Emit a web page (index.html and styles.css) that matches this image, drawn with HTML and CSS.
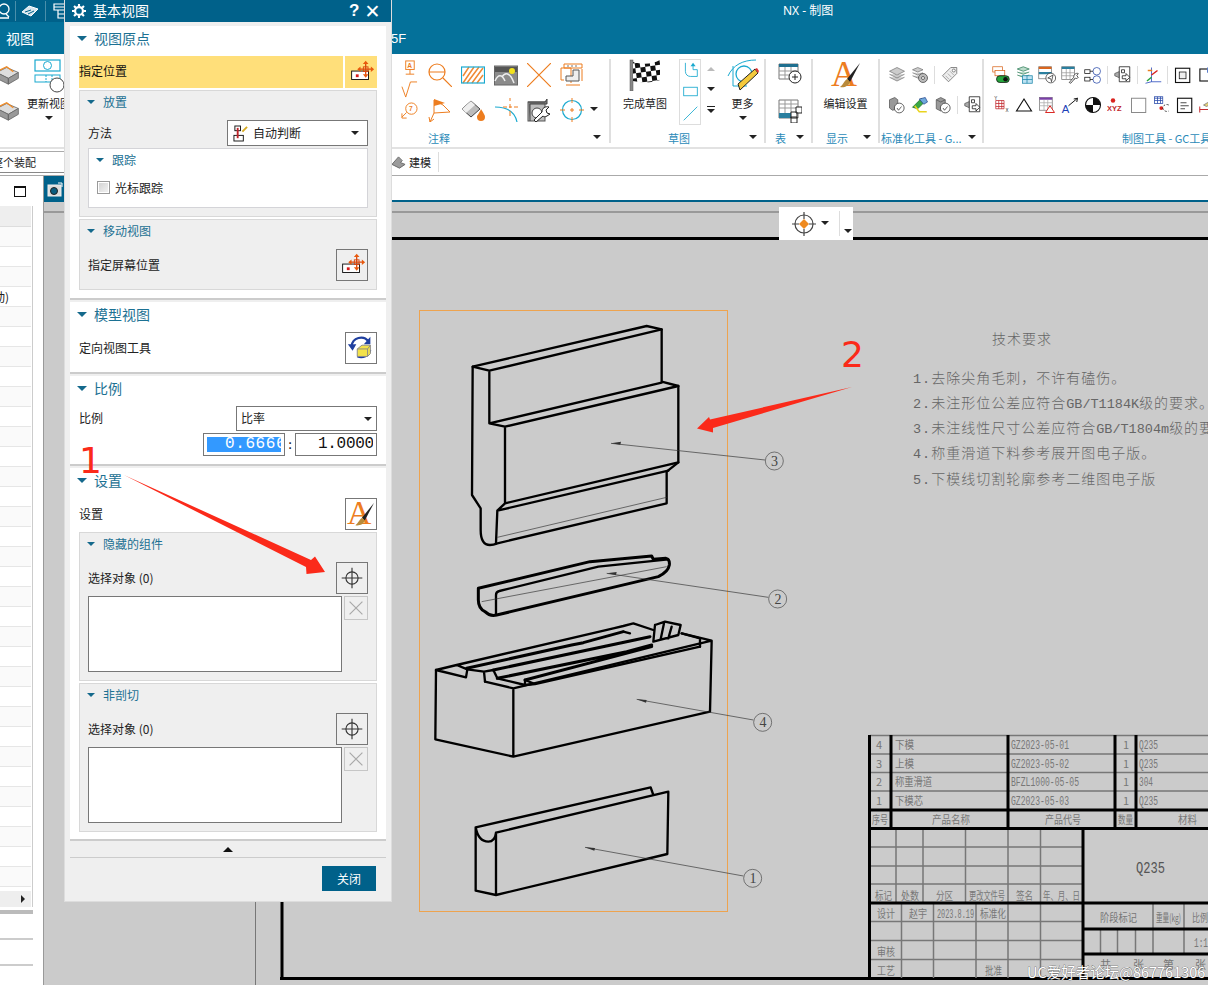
FILE: index.html
```html
<!DOCTYPE html>
<html lang="zh">
<head>
<meta charset="utf-8">
<title>NX - 制图</title>
<link rel="stylesheet" href="styles.css">
</head>
<body>
<svg class="defs" width="0" height="0">
  <defs>
    <symbol id="mv" viewBox="0 0 32 32">
      <rect x="6" y="15" width="18" height="9" fill="#fff" stroke="#111"/>
      <rect x="10.5" y="18.5" width="3" height="3" fill="#d81a1a"/>
      <path d="M21 6v14M14 13h14" stroke="#d9480f" stroke-width="1.4" fill="none"/>
      <path d="M21 4l-3 3.500h6zM21 22l-3-3.500h6zM12 13l3.500-3v6zM30 13l-3.500-3v6z" fill="#e8590c"/>
      <rect x="18.500" y="10.500" width="5" height="5" fill="none" stroke="#d9480f"/>
    </symbol>
    <symbol id="cross" viewBox="0 0 32 32">
      <circle cx="16" cy="16" r="6.500" fill="none" stroke="#333" stroke-width="1.200"/>
      <path d="M16 5v22M5 16h22" stroke="#333" stroke-width="1.200"/>
    </symbol>
    <symbol id="ex" viewBox="0 0 24 24">
      <path d="M5 5l14 14M19 5L5 19" stroke="#a9a9a9" stroke-width="1.300"/>
    </symbol>
    <symbol id="brush" viewBox="0 0 32 32">
      <text x="1" y="27" class="brush-a">A</text>
      <path d="M30 4L17 20l3 3z" fill="#222"/>
      <path d="M17 20l3 3c-1 4-6 6-10 5 3-2 4-6 7-8z" fill="#b98a3a"/>
    </symbol>
    <symbol id="grid3" viewBox="0 0 24 24">
      <path d="M1 3h19v15H1z" fill="#fff" stroke="#777"/>
      <path d="M1 3h19v3H1z" fill="#1f6f8f"/>
      <path d="M1 10h19M1 14h19M7 6v12M13 6v12" stroke="#999"/>
    </symbol>
    <pattern id="ck" width="10" height="10" patternUnits="userSpaceOnUse" patternTransform="rotate(-8)">
      <rect width="10" height="10" fill="#fff"/>
      <rect width="5" height="5" fill="#111"/>
      <rect x="5" y="5" width="5" height="5" fill="#111"/>
    </pattern>
  </defs>
</svg>

<div class="app">
  <header class="head">
    <div class="titlebar">
      <div class="qat">
        <svg class="qi" viewBox="0 0 16 20"><circle cx="6" cy="8" r="5" fill="none" stroke="#fff" stroke-width="1.300"/><path d="M1 17h10M8 13l3 3" stroke="#fff" stroke-width="1.300"/></svg>
        <span class="qsep"></span>
        <svg class="qi qhand" viewBox="0 0 18 14"><path d="M1 8l7-6 9 3-7 7z" fill="#d7e6ee" stroke="#fff"/><path d="M4 8l6-2M7 10l6-3" stroke="#00618a"/></svg>
        <span class="qsep"></span>
        <svg class="qi qwin" viewBox="0 0 14 18"><path d="M1 2h12v6H1zM1 5h12M5 8v8h8v-4H5" fill="none" stroke="#fff" stroke-width="1.200"/></svg>
      </div>
      <div class="apptitle">NX - 制图</div>
    </div>
    <nav class="tabs">
      <span class="tab">视图</span>
      <span class="tab tab-last">5F</span>
    </nav>
  </header>

  <section class="ribbon">
    <div class="rg rg-view">
      <div class="rg-body vcols">
        <div class="cubes">
          <svg class="cube" viewBox="0 0 24 24"><path d="M-4 9l12-6 14 6-12 7z" fill="#ddd" stroke="#666"/><path d="M-4 9v7l14 7v-7zM22 9v7l-12 7v-7z" fill="#999" stroke="#666"/><path d="M-4 8L8 2l8 6" fill="none" stroke="#f08a24" stroke-width="1.500"/></svg>
          <svg class="cube" viewBox="0 0 24 24"><path d="M-4 9l12-6 14 6-12 7z" fill="#ddd" stroke="#666"/><path d="M-4 9v7l14 7v-7zM22 9v7l-12 7v-7z" fill="#999" stroke="#666"/><path d="M-4 8L8 2l8 6" fill="none" stroke="#f08a24" stroke-width="1.500"/></svg>
        </div>
        <div class="bigcol">
          <svg class="update" viewBox="0 0 34 34"><rect x="1" y="1" width="25" height="11" fill="none" stroke="#19a9cf" stroke-width="1.200"/><circle cx="13.500" cy="6.500" r="4" fill="none" stroke="#19a9cf"/><rect x="1" y="16" width="25" height="7" fill="none" stroke="#19a9cf"/><path d="M12 16v7M18 16v7" stroke="#19a9cf" stroke-dasharray="2 1"/><circle cx="23" cy="26" r="7" fill="#fff" stroke="#444"/></svg>
          <span class="lbl">更新视图</span>
          <i class="dd dd-view"></i>
        </div>
      </div>
    </div>

    <div class="rg rg-annot">
      <div class="annot">
        <div class="smallcol">
          <svg class="sm" viewBox="0 0 16 18"><rect x="4" y="1" width="9" height="9" fill="none" stroke="#ed7d1f"/><text x="5.500" y="8.500" class="tiny-a">A</text><path d="M8.500 10v5M4 15h9" stroke="#ed7d1f"/></svg>
          <svg class="sm" viewBox="0 0 18 18"><path d="M1 6l4 11 5-16h7" fill="none" stroke="#ed7d1f"/></svg>
          <svg class="sm" viewBox="0 0 18 18"><circle cx="11" cy="7" r="6" fill="none" stroke="#ed7d1f"/><text x="8.500" y="10" class="tiny-a">7</text><path d="M6 11l-5 5M1 12v5h5" fill="none" stroke="#ed7d1f"/></svg>
        </div>
        <div class="icongrid">
          <svg class="ic" viewBox="0 0 24 24"><circle cx="9" cy="9" r="8" fill="none" stroke="#ed7d1f" stroke-width="1.200"/><path d="M1 9h16M15 15l9 9" stroke="#ed7d1f" stroke-width="1.200"/></svg>
          <svg class="ic" viewBox="0 0 24 24"><path d="M2 20L13 4M6 20L18 4M11 20L22 5M16 20l6-8M2 13l6-9" stroke="#f08a34" stroke-width="1.500"/><rect x="0.500" y="4" width="23" height="16" fill="none" stroke="#19a9cf" stroke-width="1.200"/></svg>
          <svg class="ic" viewBox="0 0 24 24"><rect x="0.500" y="3" width="23" height="19" fill="#8b8b8b" stroke="#666"/><path d="M1 4h22v5H1z" fill="#555"/><circle cx="18" cy="8" r="3" fill="#f4e31d"/><path d="M1 18c3-7 7-7 10 0M8 14c3-5 8-5 12 6" fill="none" stroke="#eee" stroke-width="1.500"/></svg>
          <svg class="ic" viewBox="0 0 24 24"><path d="M0 0l24 24M24 0L0 24" stroke="#ed7d1f" stroke-width="1.200"/></svg>
          <svg class="ic" viewBox="0 0 24 24"><path d="M4 1h18v4H4z" fill="none" stroke="#ed7d1f"/><path d="M7 3h2M11 3h2M15 3h2" stroke="#777"/><path d="M1 5h10v15M1 5v12h3" fill="none" stroke="#ed7d1f"/><path d="M6 18v-5h7V7h6v11z" fill="#eee" stroke="#555"/><path d="M22 6v12M6 22h14" stroke="#ed7d1f"/></svg>
          <span class="ddcell"></span>
          <svg class="ic" viewBox="0 0 24 24"><path d="M6 3v12l16-1-7-7-9-5z" fill="#fff" stroke="#ed7d1f"/><path d="M6 1l11 4-11 3z" fill="#ed7d1f"/><path d="M6 15L2 24M2 24l-1-5M2 24l4-3" fill="none" stroke="#ed7d1f"/></svg>
          <svg class="ic" viewBox="0 0 24 24"><path d="M1 11l9-8 9 8-9 8z" fill="#bbb" stroke="#444"/><path d="M1 11l9-8 4 4-9 8z" fill="#eee"/><path d="M20 11c3 5 4 6 4 8a4 4 0 0 1-8 0c0-2 2-3 4-8z" fill="#ed7d1f"/></svg>
          <svg class="ic" viewBox="0 0 24 24"><path d="M1 9c12 0 20 5 22 15" fill="none" stroke="#19a9cf" stroke-width="1.200"/><path d="M16 0v3M16 6v4M16 13v5M9 9h4M15 9h3M20 9h4" stroke="#ed7d1f"/></svg>
          <svg class="ic" viewBox="0 0 24 24"><rect x="1" y="4" width="17" height="19" fill="#bdbdbd" stroke="#555"/><path d="M1 4h17l2-3v5H3v17" fill="#777" stroke="#444"/><circle cx="10" cy="15" r="5" fill="#fff" stroke="#444"/><path d="M7 22l8-8c0-4 3-6 7-5l-3 3 1 3 3 1-3 2c-2 1-3 1-4 0l-7 6z" fill="#fff" stroke="#222"/></svg>
          <svg class="ic" viewBox="0 0 24 24"><circle cx="12" cy="12" r="9.500" fill="none" stroke="#19a9cf" stroke-width="1.200"/><path d="M12 0v5M12 10v4M12 19v5M0 12h5M10 12h4M19 12h5" stroke="#ed7d1f"/></svg>
          <span class="ddcell"><i class="dd"></i></span>
        </div>
      </div>
      <div class="rg-label lab-annot"><span>注释</span><i class="dd"></i></div>
    </div>

    <div class="rg rg-sketch">
      <div class="sketch">
        <div class="bigitem flagitem">
          <svg class="flag" viewBox="0 0 32 32"><rect x="1" y="1" width="3" height="31" fill="#888" stroke="#555" stroke-width="0.500"/><path d="M4 3c8 2 18 3 27-2v20c-8 3-18 3-27 1z" fill="url(#ck)"/></svg>
          <span class="lbl">完成草图</span>
        </div>
        <div class="gallery">
          <svg class="gi" viewBox="0 0 20 20"><path d="M4 1v10c0 4 3 6 6 6h8v-8h-5V4" fill="none" stroke="#19a9cf"/><path d="M13 1l-3 4h6z" fill="#19a9cf"/></svg>
          <svg class="gi" viewBox="0 0 20 20"><rect x="2" y="5" width="16" height="10" fill="none" stroke="#19a9cf"/></svg>
          <svg class="gi" viewBox="0 0 20 20"><path d="M2 18L18 2" stroke="#19a9cf"/></svg>
        </div>
        <div class="galctl">
          <i class="up"></i><i class="dd"></i><i class="more"></i>
        </div>
        <div class="bigitem moreitem">
          <svg class="more-ic" viewBox="0 0 32 32"><path d="M1 17C6 6 16 1 29 1M6 7v20h14" fill="none" stroke="#19a9cf"/><circle cx="17" cy="15" r="8" fill="none" stroke="#19a9cf" stroke-width="1.300"/><path d="M13 31l-2-6L28 10l3 4z" fill="#f3c93c" stroke="#222"/><path d="M28 10l3 4 1-2-2-3z" fill="#d33"/></svg>
          <span class="lbl">更多</span>
          <i class="dd dd-b"></i>
        </div>
      </div>
      <div class="rg-label lab-sketch"><span>草图</span><i class="dd"></i></div>
    </div>

    <div class="rg rg-table">
      <div class="tablecol">
        <svg class="ic" viewBox="0 0 24 24"><use href="#grid3"/><circle cx="17" cy="16" r="6" fill="#fff" stroke="#222"/><path d="M14 16h6M17 13v6" stroke="#222"/></svg>
        <svg class="ic" viewBox="0 0 24 24"><path d="M1 1h19v18H1z" fill="#fff" stroke="#777"/><path d="M1 5h19M1 9h19M7 1v18M13 1v18" stroke="#999"/><path d="M1 14h13v5H1z" fill="#2a7f9f"/><path d="M13 13h6v6h-6zM18 8h6v6h-6zM13 18h6v6h-6z" fill="#fff" stroke="#222"/></svg>
      </div>
      <div class="rg-label lab-table"><span>表</span><i class="dd"></i></div>
    </div>

    <div class="rg rg-disp">
      <div class="bigitem dispitem">
        <svg class="abr" viewBox="0 0 32 32"><use href="#brush"/></svg>
        <span class="lbl">编辑设置</span>
      </div>
      <div class="rg-label lab-disp"><span>显示</span><i class="dd"></i></div>
    </div>

    <div class="rg rg-std">
      <div class="irows">
        <div class="irow">
          <svg class="ic2" viewBox="0 0 24 24"><path d="M2 7l10-5 10 5-10 5zM2 11l10 5 10-5M2 15l10 5 10-5" fill="#ccc" stroke="#777"/></svg>
          <svg class="ic2" viewBox="0 0 24 24"><path d="M2 5l7-3 7 3-7 3zM2 9l7 3 7-3M2 13l7 3 7-3" fill="#ccc" stroke="#777"/><circle cx="16" cy="16" r="6" fill="#bbb" stroke="#444"/><circle cx="16" cy="16" r="2" fill="#fff" stroke="#444"/></svg>
          <i class="isep"></i>
          <svg class="ic2" viewBox="0 0 24 24"><path d="M2 13L13 2h8v8L10 21z" fill="#eee" stroke="#666"/><circle cx="17" cy="6" r="2" fill="#fff" stroke="#666"/><path d="M6 13l5 5M9 10l5 5M12 7l5 5" stroke="#999"/></svg>
        </div>
        <div class="irow">
          <svg class="ic2" viewBox="0 0 24 24"><path d="M2 5l7-3 4 3v12l-7 2-4-3z" fill="#999" stroke="#555"/><circle cx="15" cy="16" r="6.500" fill="#fff" stroke="#333"/><path d="M12 16l2 3 4-5" fill="none" stroke="#333"/></svg>
          <svg class="ic2" viewBox="0 0 24 24"><path d="M2 15L14 3l4 5-9 9z" fill="#39a845" stroke="#1d6d2a"/><path d="M11 4l8-2 3 6-5 3z" fill="#6fa8dc" stroke="#2a4a8f"/><path d="M5 13l6 8h10" fill="none" stroke="#e9d31f" stroke-width="2"/></svg>
          <svg class="ic2" viewBox="0 0 24 24"><path d="M3 5l6-3 6 3v12l-6 3-6-3z" fill="#999" stroke="#555"/><path d="M3 5l6 3 6-3" fill="none" stroke="#555"/><circle cx="15" cy="16" r="6.500" fill="#fff" stroke="#333"/><path d="M12 16l2 3 4-5" fill="none" stroke="#333"/></svg>
          <i class="isep"></i>
          <svg class="ic2" viewBox="0 0 24 24"><path d="M1 10l7-3v9l-7-3z" fill="#aaa" stroke="#555"/><path d="M7 1h14v20H7z" fill="#fff" stroke="#111"/><path d="M10 5h4v4h-4zM16 10l5 5-5 5v-3h-5v-4h5z" fill="#fff" stroke="#111"/></svg>
        </div>
      </div>
      <div class="rg-label lab-std"><span>标准化工具 - G...</span><i class="dd"></i></div>
    </div>

    <div class="rg rg-draft">
      <div class="irows">
        <div class="irow">
          <svg class="ic2" viewBox="0 0 24 24"><rect x="1" y="1" width="13" height="7" fill="#fff" stroke="#d9661f"/><rect x="4" y="6" width="13" height="7" fill="#fff" stroke="#d9661f"/><rect x="6" y="13" width="17" height="9" rx="4.500" fill="#25a53c" stroke="#111"/><circle cx="18" cy="17.500" r="3" fill="#111"/></svg>
          <svg class="ic2" viewBox="0 0 24 24"><path d="M3 4l8-3 8 3-8 3zM3 8l8 3 8-3M3 12l8 3 8-3" fill="#bcdccb" stroke="#2f7d5a"/><rect x="10" y="13" width="13" height="10" fill="#bfe3f3" stroke="#1c86aa"/><path d="M10 18h13M16 13v10" stroke="#1c86aa"/></svg>
          <svg class="ic2" viewBox="0 0 24 24"><rect x="1" y="1" width="17" height="16" fill="#fff" stroke="#777"/><path d="M1 1h17v3H1z" fill="#d9661f"/><path d="M1 8h17v3H1z" fill="#2a7f9f"/><circle cx="17" cy="16" r="6.500" fill="#fff" stroke="#333"/><path d="M20 12l-7 4 4 1 1 4z" fill="none" stroke="#333"/></svg>
          <svg class="ic2" viewBox="0 0 24 24"><rect x="1" y="1" width="17" height="17" fill="#fff" stroke="#777"/><path d="M1 1h17v3H1z" fill="#2a7f9f"/><path d="M1 9h17M1 13h17M7 4v14M12 4v14" stroke="#999"/><path d="M11 22l6-7c0-4 3-6 6-5l-2 3 2 2c-1 2-3 2-4 1l-6 7z" fill="#fff" stroke="#222"/></svg>
          <svg class="ic2" viewBox="0 0 24 24"><rect x="1" y="5" width="7" height="5" fill="#fff" stroke="#111"/><rect x="1" y="15" width="7" height="5" fill="#fff" stroke="#111"/><circle cx="17" cy="7" r="5" fill="#fff" stroke="#2547a8"/><circle cx="17" cy="18" r="5" fill="#fff" stroke="#2547a8"/><path d="M8 7h4M8 18h4" stroke="#111"/></svg>
          <i class="isep"></i>
          <svg class="ic2" viewBox="0 0 24 24"><path d="M1 10l7-3v9l-7-3z" fill="#aaa" stroke="#555"/><path d="M7 1h14v20H7z" fill="#fff" stroke="#111"/><path d="M10 5h4v4h-4zM16 10l5 5-5 5v-3h-5v-4h5z" fill="#fff" stroke="#111"/></svg>
          <i class="isep"></i>
          <svg class="ic2" viewBox="0 0 24 24"><path d="M10 2v19M10 21h13M10 21l-8 2" stroke="#1c3fb8" fill="none"/><path d="M10 12l8-6" stroke="#d9231f" stroke-width="2"/><path d="M4 20l6-5" stroke="#25a53c" stroke-width="2"/><path d="M5 6h6" stroke="#e8801f" stroke-width="2"/></svg>
          <i class="isep"></i>
          <svg class="ic2" viewBox="0 0 24 24"><rect x="2" y="3" width="19" height="19" fill="#fff" stroke="#111" stroke-width="1.500"/><rect x="7" y="8" width="9" height="9" fill="#eee" stroke="#111"/></svg>
          <svg class="ic2 wide" viewBox="0 0 24 24"><rect x="0.500" y="4" width="23" height="16" fill="#fff" stroke="#111" stroke-width="1.500"/><rect x="10" y="2" width="3" height="7" fill="#5b7dc9"/><path d="M16 20V12h8" stroke="#25a53c" fill="none"/></svg>
        </div>
        <div class="irow">
          <svg class="ic2" viewBox="0 0 24 24"><path d="M5 6h11v11H5zM5 10h11M5 14h11M9 6v11M13 6v11" fill="#fff" stroke="#c0242a"/><text x="3" y="5" class="tiny-k">Y</text><text x="18" y="21" class="tiny-k">X</text></svg>
          <svg class="ic2" viewBox="0 0 24 24"><path d="M12 4l10 16H2z" fill="#fff" stroke="#111" stroke-width="1.500"/></svg>
          <svg class="ic2" viewBox="0 0 24 24"><rect x="2" y="2" width="17" height="17" fill="#fff" stroke="#777"/><path d="M2 2h17v3H2z" fill="#7b3fa8"/><path d="M2 9h17M2 13h17M8 5v14M13 5v14" stroke="#aaa"/><path d="M16 13l6 9H10z" fill="#fff" stroke="#d9231f" stroke-width="1.300"/></svg>
          <svg class="ic2" viewBox="0 0 24 24"><text x="1" y="22" class="a-blue">A</text><path d="M10 13L22 3M22 3l-5 1M22 3l-1 5" fill="none" stroke="#111" stroke-width="1.300"/></svg>
          <svg class="ic2" viewBox="0 0 24 24"><circle cx="12" cy="12" r="10" fill="#fff" stroke="#111" stroke-width="1.500"/><path d="M12 2a10 10 0 0 1 10 10H12zM12 22A10 10 0 0 1 2 12h10z" fill="#111"/></svg>
          <svg class="ic2" viewBox="0 0 24 24"><circle cx="8" cy="6" r="3" fill="#d9231f"/><text x="0" y="20" class="xyz">XYZ</text></svg>
          <svg class="ic2" viewBox="0 0 24 24"><rect x="2" y="3" width="19" height="19" fill="#fff" stroke="#888" stroke-width="1.300"/></svg>
          <svg class="ic2" viewBox="0 0 24 24"><rect x="2" y="1" width="11" height="9" fill="#fff" stroke="#2547a8"/><path d="M2 3h11M2 6h11M6 1v9M10 1v9" stroke="#2547a8"/><circle cx="11" cy="16" r="2.500" fill="#d9231f"/><path d="M21 12c-4-2-8 1-8 4s5 6 8 4" fill="none" stroke="#111" stroke-dasharray="3 2"/></svg>
          <svg class="ic2" viewBox="0 0 24 24"><rect x="2" y="3" width="19" height="19" fill="#fff" stroke="#111" stroke-width="1.500"/><path d="M6 9h8M6 13h11M6 17h6" stroke="#111"/></svg>
          <svg class="ic2" viewBox="0 0 24 24"><path d="M1 18h16M1 14v8" stroke="#c0242a" stroke-width="1.300"/><path d="M6 12l12-7 4 3-12 6z" fill="#e5d078" stroke="#777"/></svg>
        </div>
      </div>
      <div class="rg-label lab-draft"><span>制图工具 - GC工具</span></div>
    </div>
  </section>

  <div class="selbar">
    <div class="asm">整个装配</div>
    <svg class="build-ic" viewBox="0 0 16 16"><path d="M1 10l7-8 4 4-2 2 5 2-6 4z" fill="#9a9a9a" stroke="#666"/></svg>
    <span class="build">建模</span>
    <i class="selsep"></i>
  </div>

  <main class="work">
    <aside class="left">
      <div class="lefttop"><i class="winbtn"></i></div>
      <div class="list">
        <div class="row-h"></div>
        <div class="row"></div><div class="row"></div><div class="row"></div>
        <div class="row"><span class="rowtxt">(动)</span></div>
        <div class="row"></div><div class="row"></div><div class="row"></div><div class="row"></div><div class="row"></div>
        <div class="row"></div><div class="row"></div><div class="row"></div><div class="row"></div><div class="row"></div>
        <div class="row"></div><div class="row"></div><div class="row"></div><div class="row"></div><div class="row"></div>
        <div class="row"></div><div class="row"></div><div class="row"></div><div class="row"></div><div class="row"></div>
        <div class="row"></div><div class="row"></div><div class="row"></div><div class="row"></div><div class="row"></div>
        <div class="row"></div><div class="row"></div><div class="row"></div><div class="row"></div>
        <div class="hscroll"><i class="rarrow"></i></div>
      </div>
      <div class="lsplit"></div>
      <div class="lrow"></div>
      <div class="lrow"></div>
    </aside>

    <div class="right">
      <div class="strip">
        <div class="vtab"><svg class="cam" viewBox="0 0 16 16"><rect x="1" y="3" width="13" height="11" fill="#ddd" stroke="#eee"/><circle cx="7" cy="9" r="3.500" fill="#0a5d80" stroke="#222"/><path d="M11 1h4v4" fill="none" stroke="#fff"/></svg></div>
      </div>
      <div class="viewline"></div>
      <div class="canvas">
        <svg class="sheet" viewBox="44 202 1164 783">
          <rect class="band" x="44" y="211" width="1164" height="2"/>
          <path class="pg" d="M255.500 202V985"/>
          <path class="bl3" d="M282 238.500H1208M282 237V979M280 978.500H1208"/>
          <rect class="frame" x="419.500" y="310.500" width="308" height="601"/>

          <g transform="translate(410 300) scale(.33333)">
            <path class="part" d="M188 200L186 585L212 625V690Q212 735 240 735Q250 735 262 730L770 610V515L805 487V258L755 245V88L710 78Z"/>
            <path class="part" d="M188 200L238 212L755 88M238 212V370L285 380L805 258M238 370L755 248M285 380V610L805 487M285 610L262 632L258 730M262 632L775 512"/>
            <path class="leader" d="M262 712L770 592"/>
            <path class="part part-w" d="M225 935Q205 925 205 900V865L540 785L725 768L730 778L768 775Q780 778 778 795Q775 815 745 830L260 945Q240 950 225 935Z"/>
            <path class="part" d="M258 945V885Q258 875 268 873L565 800L775 778"/>
            <path class="leader" d="M215 905L770 800"/>
            <path class="leader" d="M603 430L1065 480M590 820L1075 892"/>
            <path class="leader-tip" d="M603 430l30-5-2 9zM590 820l30-4-2 9z"/>
            <circle class="ring" cx="1093" cy="483" r="27"/>
            <circle class="ring" cx="1103" cy="897" r="27"/>
          </g>

          <g transform="translate(410 610) scale(.33333)">
            <path class="part" d="M78 180L76 388L310 440L900 305L905 92L815 70M310 235V440M225 215L310 235L905 92"/>
            <path class="part" d="M78 180L140 165L610 55L640 48L670 40L730 60M78 180L168 202L172 178L140 165M225 215L222 185L172 178M222 185L250 180L262 205L345 225L375 222L870 110M345 210L375 222M345 210V226"/>
            <path class="part part-w" d="M170 175L485 105L520 98L640 65M250 180L720 80M262 205L650 125L725 105M345 210L725 110"/>
            <path class="part" d="M640 65L660 70M815 70L870 85V110M735 45L765 35L812 45L805 75L730 95L735 45M762 40L752 88M785 50L775 85"/>
            <path class="part" d="M197 652L722 532L730 555M775 545L258 668M197 652V842L258 855L772 732L775 545M258 668V855M197 652Q205 695 235 695Q255 695 258 668"/>
            <path class="leader" d="M680 268L1030 330M525 712L1000 798"/>
            <path class="leader-tip" d="M680 268l30 2-2 8zM525 712l30 2-2 8z"/>
            <circle class="ring" cx="1058" cy="337" r="27"/>
            <circle class="ring" cx="1028" cy="805" r="27"/>
          </g>
          <text class="num" x="774.500" y="466">3</text>
          <text class="num" x="778" y="604">2</text>
          <text class="num" x="763" y="727">4</text>
          <text class="num" x="753" y="883">1</text>

          <text class="tech" x="992" y="344">技术要求</text>
          <text class="tech" x="913" y="383"><tspan class="mm">1.</tspan>去除尖角毛刺，不许有磕伤。</text>
          <text class="tech" x="913" y="408"><tspan class="mm">2.</tspan>未注形位公差应符合<tspan class="m">GB/T1184K</tspan>级的要求。</text>
          <text class="tech" x="913" y="433"><tspan class="mm">3.</tspan>未注线性尺寸公差应符合<tspan class="m">GB/T1804m</tspan>级的要求</text>
          <text class="tech" x="913" y="458"><tspan class="mm">4.</tspan>称重滑道下料参考展开图电子版。</text>
          <text class="tech" x="913" y="484"><tspan class="mm">5.</tspan>下模线切割轮廓参考二维图电子版</text>

          <path class="thin" d="M870 735.500H1208M870 754H1208M870 772.500H1208M870 791H1208"/>
          <path class="thin" d="M869 847H1083M869 866H1083M869 884H1083M869 921.500H1083M869 940.500H1083M869 959.500H1083"/>
          <path class="thin" d="M896 829V903M923 829V903M965.500 829V903M1008 829V978M1040.500 829V978M901.500 903V978M933.500 903V978M976 903V978"/>
          <path class="thin" d="M1153 903V954M1184 903V954M1100.500 929V954M1117.500 929V954M1135.500 929V954"/>
          <path class="bl3" d="M869.500 735V978M891 735V828M1008 735V828M1115 735V828M1136 735V828M869 810H1208M869 828.500H1208M869 903H1208M1083 828V978M1083 929H1208M1083 954H1208"/>

          <g class="tb">
            <text x="876" y="749">4</text><text x="895" y="749" textLength="19" lengthAdjust="spacingAndGlyphs">下模</text><text class="m" x="1011" y="749" textLength="58" lengthAdjust="spacingAndGlyphs">GZ2023-05-01</text><text x="1123" y="749">1</text><text class="m" x="1139" y="749" textLength="19" lengthAdjust="spacingAndGlyphs">Q235</text>
            <text x="876" y="768">3</text><text x="895" y="768" textLength="19" lengthAdjust="spacingAndGlyphs">上模</text><text class="m" x="1011" y="768" textLength="58" lengthAdjust="spacingAndGlyphs">GZ2023-05-02</text><text x="1123" y="768">1</text><text class="m" x="1139" y="768" textLength="19" lengthAdjust="spacingAndGlyphs">Q235</text>
            <text x="876" y="786">2</text><text x="895" y="786" textLength="37" lengthAdjust="spacingAndGlyphs">称重滑道</text><text class="m" x="1011" y="786" textLength="68" lengthAdjust="spacingAndGlyphs">BFZL1000-05-05</text><text x="1123" y="786">1</text><text class="m" x="1139" y="786" textLength="14" lengthAdjust="spacingAndGlyphs">304</text>
            <text x="876" y="805">1</text><text x="895" y="805" textLength="28" lengthAdjust="spacingAndGlyphs">下模芯</text><text class="m" x="1011" y="805" textLength="58" lengthAdjust="spacingAndGlyphs">GZ2023-05-03</text><text x="1123" y="805">1</text><text class="m" x="1139" y="805" textLength="19" lengthAdjust="spacingAndGlyphs">Q235</text>
            <text x="872" y="824" textLength="16" lengthAdjust="spacingAndGlyphs">序号</text><text x="932" y="824" textLength="38" lengthAdjust="spacingAndGlyphs">产品名称</text><text x="1045" y="824" textLength="36" lengthAdjust="spacingAndGlyphs">产品代号</text><text x="1118" y="824" textLength="15" lengthAdjust="spacingAndGlyphs">数量</text><text x="1178" y="824" textLength="19" lengthAdjust="spacingAndGlyphs">材料</text>
            <text x="875" y="900" textLength="17" lengthAdjust="spacingAndGlyphs">标记</text><text x="901" y="900" textLength="18" lengthAdjust="spacingAndGlyphs">处数</text><text x="936" y="900" textLength="17" lengthAdjust="spacingAndGlyphs">分区</text><text x="969" y="900" textLength="36" lengthAdjust="spacingAndGlyphs">更改文件号</text><text x="1016" y="900" textLength="17" lengthAdjust="spacingAndGlyphs">签名</text><text x="1043" y="900" textLength="37" lengthAdjust="spacingAndGlyphs">年、月、日</text>
            <text x="877" y="918" textLength="18" lengthAdjust="spacingAndGlyphs">设计</text><text x="909" y="918" textLength="18" lengthAdjust="spacingAndGlyphs">赵宇</text><text class="m" x="937" y="918" textLength="37" lengthAdjust="spacingAndGlyphs">2023.8.19</text><text x="980" y="918" textLength="26" lengthAdjust="spacingAndGlyphs">标准化</text>
            <text x="877" y="956" textLength="18" lengthAdjust="spacingAndGlyphs">审核</text><text x="877" y="975" textLength="18" lengthAdjust="spacingAndGlyphs">工艺</text><text x="985" y="975" textLength="17" lengthAdjust="spacingAndGlyphs">批准</text>
            <text x="1100" y="922" textLength="37" lengthAdjust="spacingAndGlyphs">阶段标记</text><text x="1156" y="922" textLength="25" lengthAdjust="spacingAndGlyphs">重量(kg)</text><text x="1192" y="922" textLength="16" lengthAdjust="spacingAndGlyphs">比例</text>
            <text class="m" x="1194" y="947" textLength="14" lengthAdjust="spacingAndGlyphs">1:1</text>
            <text x="1100" y="969">共</text><text x="1133" y="969">张</text><text x="1163" y="969">第</text><text x="1195" y="969">张</text>
          </g>
          <text class="q235" x="1136" y="873" textLength="29" lengthAdjust="spacingAndGlyphs">Q235</text>
          <text class="wm" x="1027" y="978">UC爱好者论坛@867761306</text>
        </svg>
        <div class="floatbar">
          <svg class="fb-ic" viewBox="0 0 24 24"><circle cx="12" cy="12" r="9" fill="#fff" stroke="#444" stroke-width="1.200"/><path d="M12 0v7M12 17v7M0 12h7M17 12h7" stroke="#444" stroke-width="1.200"/><path d="M12 7l5 5-5 5-5-5z" fill="#ef8a1f"/></svg>
          <i class="dd"></i>
          <i class="fsep"></i>
          <i class="dd dd-low"></i>
        </div>
      </div>
    </div>
  </main>

  <div class="dialog">
    <div class="dtitle">
      <svg class="gear" viewBox="0 0 16 16"><circle cx="8" cy="8" r="4.500" fill="none" stroke="#fff" stroke-width="2.500"/><path d="M8 0v3M8 13v3M0 8h3M13 8h3M2.300 2.300l2.100 2.100M11.600 11.600l2.100 2.100M13.700 2.300l-2.100 2.100M4.400 11.600l-2.100 2.100" stroke="#fff" stroke-width="2.400"/></svg>
      <span class="dname">基本视图</span>
      <span class="dq">?</span>
      <span class="dx">✕</span>
    </div>

    <section class="sec sec-a">
      <h3 class="sechead"><i class="tri"></i>视图原点</h3>
      <div class="hilite">
        <div class="hl-text">指定位置</div>
        <div class="hl-btn"><svg class="btn-ic" viewBox="0 0 32 32"><use href="#mv"/></svg></div>
      </div>
      <div class="sub sub-place">
        <h4 class="subhead"><i class="tri"></i>放置</h4>
        <div class="formrow r-method">
          <span>方法</span>
          <div class="select sel-auto">
            <svg class="sel-ic" viewBox="0 0 16 18"><rect x="2" y="1" width="6" height="5" fill="none" stroke="#111"/><rect x="1" y="11" width="10" height="6" fill="none" stroke="#111"/><path d="M5 3v11" stroke="#c0242a" stroke-width="2"/><path d="M10 7l5-5" stroke="#d6a91f" stroke-width="2"/></svg>
            <span class="sel-t">自动判断</span><i class="dd"></i>
          </div>
        </div>
        <div class="nested">
          <h4 class="subhead nest-h"><i class="tri"></i>跟踪</h4>
          <label class="chk"><i class="box"></i>光标跟踪</label>
        </div>
      </div>
      <div class="sub sub-move">
        <h4 class="subhead"><i class="tri"></i>移动视图</h4>
        <div class="formrow r-move">
          <span>指定屏幕位置</span>
          <div class="btn"><svg class="btn-ic" viewBox="0 0 32 32"><use href="#mv"/></svg></div>
        </div>
      </div>
    </section>

    <section class="sec sec-b">
      <h3 class="sechead"><i class="tri"></i>模型视图</h3>
      <div class="formrow r-b">
        <span>定向视图工具</span>
        <div class="btn"><svg class="btn-ic" viewBox="0 0 32 32"><path d="M6 14a10 10 0 0 1 18-5" fill="none" stroke="#1f3f9f" stroke-width="2.400"/><path d="M26 4v8h-7zM2 12h9l-4 7z" fill="#1f3f9f"/><path d="M26 18a10 10 0 0 1-14 7" fill="none" stroke="#1f3f9f" stroke-width="2"/><path d="M12 17l5-4h9v9l-3 3H12z" fill="#f3e24a" stroke="#888"/><path d="M12 17h11v8M23 17l3-4" fill="none" stroke="#888"/></svg></div>
      </div>
    </section>

    <section class="sec sec-c">
      <h3 class="sechead"><i class="tri"></i>比例</h3>
      <div class="formrow r-scale">
        <span>比例</span>
        <div class="select sel-ratio"><span class="sel-t">比率</span><i class="dd"></i></div>
      </div>
      <div class="ratio">
        <div class="num-in"><span class="sel-num">0.66666</span></div>
        <span class="colon">:</span>
        <div class="num-in"><span class="plain-num">1.00000</span></div>
      </div>
    </section>

    <section class="sec sec-d">
      <h3 class="sechead"><i class="tri"></i>设置</h3>
      <div class="formrow r-b r-set">
        <span>设置</span>
        <div class="btn"><svg class="btn-ic" viewBox="0 0 32 32"><use href="#brush"/></svg></div>
      </div>
      <div class="sub sub-obj">
        <h4 class="subhead"><i class="tri"></i>隐藏的组件</h4>
        <div class="formrow r-sel">
          <span>选择对象 (0)</span>
          <div class="btn"><svg class="btn-ic" viewBox="0 0 32 32"><use href="#cross"/></svg></div>
        </div>
        <div class="objrow">
          <div class="objlist"></div>
          <div class="xbtn"><svg class="x-ic" viewBox="0 0 24 24"><use href="#ex"/></svg></div>
        </div>
      </div>
      <div class="sub sub-obj">
        <h4 class="subhead"><i class="tri"></i>非剖切</h4>
        <div class="formrow r-sel">
          <span>选择对象 (0)</span>
          <div class="btn"><svg class="btn-ic" viewBox="0 0 32 32"><use href="#cross"/></svg></div>
        </div>
        <div class="objrow">
          <div class="objlist"></div>
          <div class="xbtn"><svg class="x-ic" viewBox="0 0 24 24"><use href="#ex"/></svg></div>
        </div>
      </div>
    </section>

    <div class="collapse"><i class="uptri"></i></div>
    <div class="dfoot"><button class="close">关闭</button></div>
  </div>

  <svg class="notes" viewBox="0 0 1208 985">
    <polygon points="124,475 311,560 315,556.500 325,572 306.500,574 306,567"/>
    <polygon points="852,387 710,419.500 709,417 697,428.500 713,432.500 713,428"/>
    <text x="79" y="473">1</text>
    <text x="841" y="367">2</text>
  </svg>
</div>
</body>
</html>
```

FILE: styles.css
```css
* { box-sizing: border-box; }
html, body { margin: 0; padding: 0; height: 100%; overflow: hidden; }
body { font-family: "Noto Sans CJK SC", "Noto Sans", sans-serif; font-size: 12px; color: #222; background: #fff; }
i { display: block; font-style: normal; }
h3, h4 { margin: 0; font-weight: 400; }
.defs { position: absolute; }
.brush-a { font-family: "Liberation Serif", serif; font-size: 36px; fill: #ed7d1f; }
.tiny-a { font-family: "Liberation Sans", sans-serif; font-size: 7px; font-weight: 700; fill: #ed7d1f; }
.tiny-k { font-family: "Liberation Sans", sans-serif; font-size: 6px; fill: #222; }
.a-blue { font-family: "Liberation Sans", sans-serif; font-size: 15px; fill: #1c3fb8; }
.xyz { font-family: "Liberation Sans", sans-serif; font-size: 10px; font-weight: 700; fill: #c0242a; }

.app { position: relative; width: 1208px; height: 985px; overflow: hidden; display: flex; flex-direction: column; }

/* header */
.head { height: 54px; background: #04719a; color: #fff; flex: none; }
.titlebar { height: 22px; display: flex; }
.qat { width: 392px; height: 22px; background: #00618a; display: flex; align-items: center; }
.qi { width: 16px; height: 20px; flex: none; margin-left: -2px; }
.qsep { width: 1px; height: 20px; background: #4a8fab; margin: 0 1px; flex: none; }
.qhand { width: 18px; height: 14px; margin: 0 5px 0 4px; }
.qwin { width: 14px; height: 18px; margin-left: 6px; }
.apptitle { margin-left: 391px; font-size: 12px; line-height: 22px; font-family: "Noto Sans", "Noto Sans CJK SC", sans-serif; }
.tabs { height: 32px; display: flex; font-size: 14px; line-height: 33px; background: #04719a; }
.tab { padding-left: 6px; }
.tab-last { margin-left: 351px; font-family: "Liberation Sans", sans-serif; font-size: 13px; }

/* ribbon */
.ribbon { height: 93px; flex: none; display: flex; padding-top: 5px; background: #fff; font-size: 11px; }
.rg { height: 84px; border-right: 2px solid #dfdfdf; display: flex; flex-direction: column; flex: none; position: relative; }
.rg-label { height: 14px; margin-top: auto; margin-bottom: -1px; display: flex; align-items: center; color: #2a8ab8; line-height: 14px; white-space: nowrap; }
.rg-label span { padding-top: 2px; }
.rg-label .dd { margin-left: auto; }
.lbl { white-space: nowrap; color: #222; line-height: 14px; }
.dd { width: 0; height: 0; border-left: 4px solid transparent; border-right: 4px solid transparent; border-top: 4px solid #222; }
.ic { width: 24px; height: 24px; display: block; }
.ic2 { width: 18px; height: 18px; display: block; flex: none; margin: 0 2.500px; }
.ic2.wide { width: 23px; margin-left: 3px; margin-right: 0; }
.sm { width: 17px; height: 17px; display: block; }

.rg-view { width: 65px; border-right: 0; }
.vcols { display: flex; height: 70px; }
.cubes { width: 27px; flex: none; display: flex; flex-direction: column; gap: 12px; padding-top: 4px; }
.cube { width: 20px; height: 24px; overflow: visible; }
.bigcol { display: flex; flex-direction: column; overflow: visible; }
.update { width: 34px; height: 34px; margin: 0 0 3px 7px; display: block; flex: none; }
.dd-view { margin: 6px 0 0 18px; }

.rg-annot { width: 546px; }
.annot { display: flex; padding: 0 0 0 336px; height: 70px; }
.smallcol { width: 22px; display: flex; flex-direction: column; gap: 4px; padding-top: 1px; }
.icongrid { display: grid; grid-template-columns: repeat(5, 33px) 11px; grid-auto-rows: 35px; justify-items: center; padding-top: 4px; }
.ddcell { display: flex; justify-content: center; width: 100%; padding-top: 9px; }
.lab-annot { padding: 0 8px 0 363px; }

.rg-sketch { width: 155px; }
.sketch { display: flex; height: 70px; }
.bigitem { display: flex; flex-direction: column; align-items: center; }
.flagitem { width: 68px; }
.flag { width: 32px; height: 32px; margin-bottom: 5px; display: block; flex: none; }
.gallery { width: 22px; height: 66px; border: 1px solid #ddd; display: flex; flex-direction: column; align-items: center; justify-content: space-around; }
.gi { width: 17px; height: 17px; display: block; }
.galctl { width: 20px; display: flex; flex-direction: column; align-items: center; }
.galctl .up { width: 0; height: 0; border-left: 4px solid transparent; border-right: 4px solid transparent; border-bottom: 4px solid #bbb; margin: 8px 0 16px; }
.galctl .more { width: 8px; height: 6px; margin-top: 15px; border-top: 1px solid #222; position: relative; }
.galctl .more::after { content: ""; display: block; width: 0; height: 0; border-left: 4px solid transparent; border-right: 4px solid transparent; border-top: 4px solid #222; margin-top: 2px; }
.moreitem { width: 43px; margin-left: 0; }
.more-ic { width: 34px; height: 32px; margin-bottom: 5px; display: block; flex: none; }
.dd-b { margin-top: 6px; }
.lab-sketch { padding: 0 7px 0 57px; }

.rg-table { width: 47px; }
.tablecol { display: flex; flex-direction: column; gap: 14px; height: 70px; padding: 2px 0 0 12px; }
.lab-table { padding: 0 7px 0 9px; }

.rg-disp { width: 67px; }
.dispitem { height: 70px; }
.abr { width: 34px; height: 32px; margin-bottom: 5px; display: block; flex: none; }
.lab-disp { padding: 0 7px 0 13px; }

.rg-std { width: 104px; }
.irows { height: 70px; display: flex; flex-direction: column; gap: 12px; padding: 7px 0 0 5px; }
.irow { display: flex; align-items: center; height: 18px; }
.isep { width: 1px; height: 18px; background: #ddd; margin: 0 3px; flex: none; }
.lab-std { padding: 0 6px 0 1px; }

.rg-draft { width: 240px; border-right: 0; }
.lab-draft { padding-left: 138px; }

/* selection bar */
.selbar { height: 29px; flex: none; display: flex; align-items: center; border-top: 2px solid #e2e2e2; border-bottom: 1px solid #aaa; background: #fff; font-size: 11px; }
.asm { width: 64px; height: 22px; line-height: 21px; text-indent: -8px; border-top: 1px solid #aaa; border-bottom: 1px solid #888; overflow: hidden; white-space: nowrap; flex: none; }
.build-ic { width: 15px; height: 15px; margin-left: 327px; flex: none; }
.build { margin-left: 3px; line-height: 16px; }
.selsep { width: 1px; height: 20px; background: #ddd; margin-left: 7px; }

/* work area */
.work { flex: 1; display: flex; min-height: 0; }
.left { width: 43px; flex: none; background: #fff; overflow: hidden; }
.lefttop { height: 30px; padding: 10px 0 0 14px; }
.winbtn { width: 12px; height: 11px; border: 1px solid #111; border-top-width: 2px; }
.list { width: 33px; border-right: 1px solid #ccc; }
.row-h { height: 21px; background: #eee; border-bottom: 1px solid #ddd; margin-right: 1px; }
.row { height: 20px; border-bottom: 1px solid #e6e6e6; margin-right: 1px; white-space: nowrap; overflow: hidden; line-height: 20px; }
.row:nth-child(even) { background: #fafafa; }
.rowtxt { margin-left: -11px; display: block; }
.hscroll { height: 16px; margin: 4px 1px 0 0; background: #eee; display: flex; align-items: center; justify-content: flex-end; padding-right: 6px; }
.rarrow { width: 0; height: 0; border-top: 4px solid transparent; border-bottom: 4px solid transparent; border-left: 4px solid #222; }
.lsplit { width: 33px; height: 4px; background: #bbb; margin-top: 3px; }
.lrow { width: 33px; height: 26px; border-bottom: 2px solid #ccc; }

.right { flex: 1; display: flex; flex-direction: column; border-left: 1px solid #999; min-width: 0; }
.strip { height: 24px; flex: none; background: #fff; }
.vtab { width: 21px; height: 24px; background: #00618a; padding: 6px 0 0 3px; }
.cam { width: 16px; height: 16px; display: block; }
.viewline { height: 2px; flex: none; background: #00618a; }
.canvas { flex: 1; position: relative; background: #cbcbcb; overflow: hidden; }
.sheet { width: 1164px; height: 783px; display: block; }
.band { fill: #999; }
.pg { stroke: #777; fill: none; }
.bl3 { stroke: #000; stroke-width: 3; fill: none; }
.frame { fill: none; stroke: #eda34f; }
.part { fill: none; stroke: #000; stroke-width: 7; stroke-linejoin: round; stroke-linecap: round; }
.part-w { stroke-width: 9; }
.leader { fill: none; stroke: #333; stroke-width: 2; }
.leader-tip { fill: #333; }
.ring { fill: none; stroke: #444; stroke-width: 2; }
.num { font-family: "Liberation Serif", serif; font-size: 14px; fill: #444; text-anchor: middle; }
.tech { font-family: "Noto Sans CJK SC", sans-serif; font-size: 14px; letter-spacing: 1px; fill: #666; font-weight: 300; }
.tech .m { font-family: "Liberation Mono", monospace; font-size: 13.500px; letter-spacing: 0; }
.tech .mm { font-family: "Liberation Mono", monospace; font-size: 13.500px; letter-spacing: 1px; }
.thin { stroke: #777; stroke-width: 1.500; fill: none; }
.tb text { font-family: "Noto Sans CJK SC", sans-serif; font-size: 11px; fill: #777; }
.tb text.m { font-family: "Liberation Mono", monospace; font-size: 12px; }
.q235 { font-family: "Liberation Mono", monospace; font-size: 17px; fill: #555; }
.wm { font-family: "Noto Sans CJK SC", sans-serif; font-size: 14.500px; fill: #fff; stroke: #444; stroke-width: .5px; paint-order: stroke; }

.floatbar { position: absolute; left: 735px; top: 5px; width: 74px; height: 33px; background: #fff; display: flex; align-items: center; }
.fb-ic { width: 24px; height: 24px; margin-left: 13px; flex: none; }
.floatbar .dd { margin-left: 5px; margin-top: -2px; }
.fsep { width: 1px; height: 25px; background: #ddd; margin-left: 10px; }
.floatbar .dd-low { margin-left: 4px; margin-top: 14px; }

/* dialog */
.dialog { position: absolute; left: 64px; top: 0; width: 328px; height: 902px; background: #efefef; border: 1px solid #ddd; border-top: 0; padding: 0 5px; z-index: 5; display: flex; flex-direction: column; }
.dtitle { height: 22px; flex: none; margin: 0 -5px 4px -5px; background: #00618a; color: #fff; display: flex; align-items: center; padding-left: 7px; }
.gear { width: 14px; height: 14px; flex: none; }
.dname { font-size: 14px; margin-left: 7px; line-height: 20px; padding-bottom: 2px; }
.dq { font-family: "Liberation Sans", sans-serif; font-weight: 700; font-size: 17px; margin-left: 200px; line-height: 20px; }
.dx { font-family: "DejaVu Sans", sans-serif; font-weight: 700; font-size: 19px; margin-left: 5px; line-height: 20px; }

.sec { background: #fff; border-bottom: 2px solid #ccc; padding: 0 9px; flex: none; margin-bottom: 2px; }
.sec-a { height: 274px; }
.sec-b { height: 72px; }
.sec-c { height: 90px; }
.sec-d { height: 373px; margin-bottom: 0; }
.sechead { height: 26px; display: flex; align-items: center; font-size: 14px; color: #1c7193; margin: 0 0 0 -2px; padding-bottom: 2px; }
.tri { width: 0; height: 0; border-left: 5px solid transparent; border-right: 5px solid transparent; border-top: 5px solid #14698c; margin-right: 7px; flex: none; }
.subhead { height: 23px; display: flex; align-items: center; font-size: 12px; color: #1c7193; padding-left: 7px; padding-bottom: 2px; }
.subhead .tri { border-left-width: 4px; border-right-width: 4px; border-top-width: 4px; margin-right: 8px; }

.hilite { display: flex; height: 32px; margin-top: 4px; gap: 2px; }
.hl-text { flex: 1; background: #ffdf7a; line-height: 30px; color: #111; }
.hl-btn { width: 32px; background: #ffdf7a; display: flex; align-items: center; justify-content: center; }
.btn-ic { width: 30px; height: 30px; display: block; }
.sub { background: #efefef; border: 1px solid #d8d8d8; margin-top: 2px; }
.sub-place { height: 127px; }
.sub-move { height: 71px; }
.formrow { display: flex; align-items: center; justify-content: space-between; }
.formrow > span { padding-bottom: 2px; }
.r-method { height: 26px; margin-top: 6px; padding: 0 8px; }
.select { height: 26px; background: #fff; border: 1px solid #777; display: flex; align-items: center; color: #222; }
.sel-auto { width: 141px; padding: 0 4px 0 5px; }
.sel-ic { width: 15px; height: 17px; flex: none; margin-right: 5px; }
.sel-t { flex: 1; padding-bottom: 2px; }
.select .dd { margin-right: 4px; border-top-width: 4px; }
.nested { height: 60px; margin: 2px 8px 0; background: #fff; border: 1px solid #d4d4d8; }
.nest-h { padding-left: 7px; }
.chk { display: flex; align-items: center; padding: 7px 0 0 8px; color: #222; }
.box { width: 13px; height: 13px; border: 1px solid #9a9a9a; background: linear-gradient(135deg, #d0d0d0, #f4f4f4); box-shadow: inset 0 0 0 1px #fff; margin-right: 5px; }
.r-move { height: 32px; margin-top: 6px; padding: 0 8px; }
.btn { width: 32px; height: 32px; border: 1px solid #777; background: #fff; display: flex; align-items: center; justify-content: center; flex: none; }
.sub .btn { background: #efefef; }
.r-b { height: 32px; margin-top: 4px; }
.r-scale { height: 25px; margin-top: 4px; }
.sel-ratio { width: 141px; height: 25px; padding: 0 0 0 4px; }
.ratio { display: flex; justify-content: flex-end; align-items: center; margin-top: 2px; }
.num-in { width: 82px; height: 23px; background: #fff; border: 1px solid #777; padding: 3px; overflow: hidden; font-family: "Liberation Mono", monospace; font-size: 16px; line-height: 17px; }
.sel-num { display: block; height: 15px; width: 74px; background: #3399ff; color: #fff; padding-left: 18px; overflow: hidden; white-space: nowrap; line-height: 15px; letter-spacing: .6px; }
.plain-num { display: block; width: 74px; padding-left: 19px; overflow: hidden; white-space: nowrap; color: #111; line-height: 15px; letter-spacing: -.3px; }
.colon { width: 10px; text-align: center; font-family: "DejaVu Sans Mono", monospace; }
.r-set { margin-bottom: 2px; }
.sub-obj { height: 149px; }
.r-sel { height: 32px; margin-top: 6px; padding: 0 8px; }
.objrow { display: flex; gap: 2px; padding: 2px 8px 0; }
.objlist { flex: 1; height: 76px; background: #fff; border: 1px solid #777; }
.xbtn { width: 24px; height: 24px; border: 1px solid #c6c6c6; background: #efefef; flex: none; }
.x-ic { width: 22px; height: 22px; display: block; }
.collapse { height: 17px; flex: none; border-bottom: 1px solid #ccc; display: flex; align-items: center; justify-content: center; background: #efefef; }
.uptri { width: 0; height: 0; border-left: 5px solid transparent; border-right: 5px solid transparent; border-bottom: 5px solid #111; }
.dfoot { flex: 1; display: flex; justify-content: flex-end; padding: 8px 10px 0 0; }
.close { width: 54px; height: 25px; background: #00618a; color: #fff; border: 0; font-family: inherit; font-size: 12px; padding: 0; }

/* annotations */
.notes { position: absolute; left: 0; top: 0; width: 1208px; height: 985px; z-index: 6; pointer-events: none; }
.notes polygon { fill: #fb2a1a; }
.notes text { font-family: "DejaVu Sans", sans-serif; font-size: 36px; fill: #fb2a1a; }
```
